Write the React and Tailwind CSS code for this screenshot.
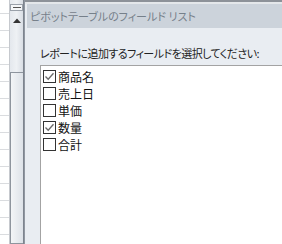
import React from "react";

const items = [
  { label: "商品名", checked: true },
  { label: "売上日", checked: false },
  { label: "単価", checked: false },
  { label: "数量", checked: true },
  { label: "合計", checked: false },
];

function Box({ checked }) {
  return (
    <div className="w-[13px] h-[13px] border border-[#333333] bg-white flex items-center justify-center shrink-0">
      {checked && (
        <svg width="11" height="11" viewBox="0 0 11 11">
          <path d="M1.5 5.5 L4.2 8.3 L9.5 2.2" fill="none" stroke="#6a6a6a" strokeWidth="1.3" />
        </svg>
      )}
    </div>
  );
}

export default function App() {
  const rows = Array.from({ length: 14 });
  return (
    <div
      className="flex w-[282px] h-[244px] overflow-hidden bg-white [font-feature-settings:'palt']"
      style={{ fontFamily: '"Noto Sans CJK JP", "Noto Sans", sans-serif' }}
    >
      {/* spreadsheet cells */}
      <div className="w-[10px] shrink-0 flex flex-col border-r border-[#c6c9ce] bg-white pt-[13px]">
        {rows.map((_, i) => (
          <div key={i} className="h-[17px] shrink-0 border-t border-[#dadcdf]" />
        ))}
      </div>
      {/* scrollbar */}
      <div className="w-[13px] shrink-0 flex flex-col bg-gradient-to-r from-[#e4e8ed] via-[#eef1f4] to-[#d9dee5]">
        <div className="mt-[4px] h-[7px] border border-[#9aa1aa] bg-[#f4f6f8] flex items-center justify-center">
          <div className="w-[8px] h-[1px] bg-[#555]" />
        </div>
        <div className="mt-[7px] flex justify-center">
          <svg width="8" height="5" viewBox="0 0 8 5">
            <path d="M0 5 L4 0.5 L8 5 Z" fill="#333" />
          </svg>
        </div>
        <div className="mt-[49px] flex-1 border border-r-0 border-[#8e959e] bg-gradient-to-r from-[#f3f5f7] to-[#dde2e8]" />
      </div>
      {/* divider */}
      <div className="w-[2px] shrink-0 bg-[#9097a1] border-l border-[#7d848e]" />
      {/* panel */}
      <div className="flex-1 flex flex-col bg-[#e9edf2] min-w-0">
        <div className="h-[2px] bg-[#8d9299] shrink-0" />
        <div className="h-[2px] bg-[#e4e7ea] shrink-0" />
        <div className="h-[24px] ml-[2px] bg-[#ccd3db] shrink-0 flex items-center pl-[3px] text-[11px] text-[#76808a] whitespace-nowrap leading-none">
          ピボットテーブルのフィールド リスト
        </div>
        <div className="h-[37px] shrink-0 flex items-end pl-[15px] pb-[6px] text-[11px] tracking-[-0.55px] text-[#222] whitespace-nowrap leading-none">
          レポートに追加するフィールドを選択してください:
        </div>
        <div className="ml-[15px] flex-1 bg-white border-l border-t border-[#a3a3a3] pt-[2px] pl-[2px] flex flex-col">
          {items.map((it) => (
            <div key={it.label} className="h-[17px] flex items-center gap-[2px] text-[12px] text-[#111] leading-none whitespace-nowrap">
              <Box checked={it.checked} />
              <span>{it.label}</span>
            </div>
          ))}
        </div>
      </div>
    </div>
  );
}
